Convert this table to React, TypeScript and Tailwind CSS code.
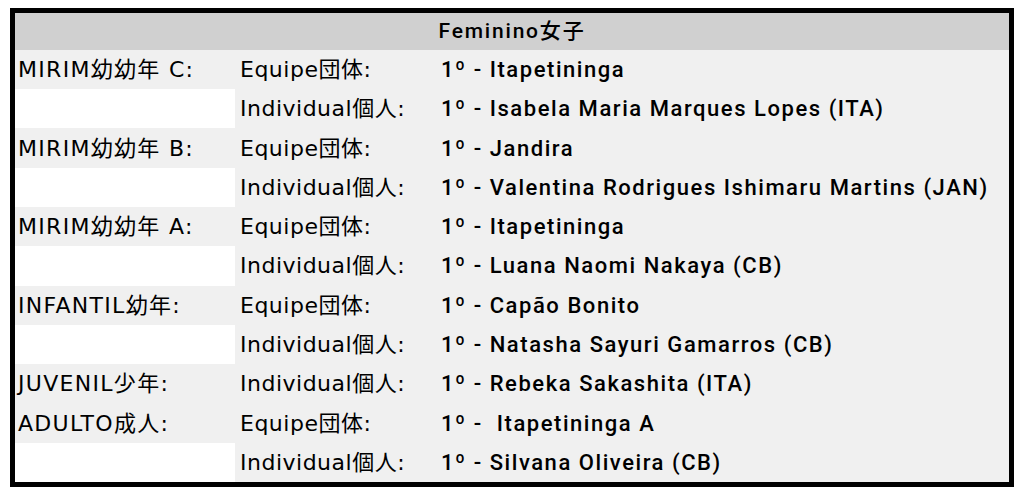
import React from "react";

const rows: [string, string, string][] = [
  ["MIRIM幼幼年 C:", "Equipe団体:", "1º - Itapetininga"],
  ["", "Individual個人:", "1º - Isabela Maria Marques Lopes (ITA)"],
  ["MIRIM幼幼年 B:", "Equipe団体:", "1º - Jandira"],
  ["", "Individual個人:", "1º - Valentina Rodrigues Ishimaru Martins (JAN)"],
  ["MIRIM幼幼年 A:", "Equipe団体:", "1º - Itapetininga"],
  ["", "Individual個人:", "1º - Luana Naomi Nakaya (CB)"],
  ["INFANTIL幼年:", "Equipe団体:", "1º - Capão Bonito"],
  ["", "Individual個人:", "1º - Natasha Sayuri Gamarros (CB)"],
  ["JUVENIL少年:", "Individual個人:", "1º - Rebeka Sakashita (ITA)"],
  ["ADULTO成人:", "Equipe団体:", "1º -  Itapetininga A"],
  ["", "Individual個人:", "1º - Silvana Oliveira (CB)"],
];

export default function App() {
  return (
    <div className="w-[1024px] h-[497px] bg-white pt-[8px] pl-[10px]">
      <div className="w-[1004px] h-[479px] border-[5px] border-black flex flex-col bg-[#f0f0f0]">
        <div className="h-[37px] bg-[#d0d0d0] flex items-center justify-center text-[21px] font-medium tracking-[1.8px] text-black whitespace-pre font-['Roboto','Noto_Sans_CJK_JP',sans-serif]">
          Feminino女子
        </div>
        {rows.map((r, i) => (
          <div key={i} className="h-[39.4px] flex items-center text-black">
            <div
              className={`w-[220px] h-full flex items-center pl-[3px] text-[22px] tracking-[1.3px] whitespace-pre font-['DejaVu_Sans','Noto_Sans_CJK_JP',sans-serif] ${
                r[0] === "" ? "bg-white" : ""
              }`}
            >
              {r[0]}
            </div>
            <div className="w-[206px] pl-[5px] text-[22px] tracking-[0.5px] whitespace-pre font-['DejaVu_Sans','Noto_Sans_CJK_JP',sans-serif]">
              {r[1]}
            </div>
            <div className="flex-1 text-[22px] font-medium tracking-[1.55px] whitespace-pre font-['Roboto','Noto_Sans_CJK_JP',sans-serif]">
              {r[2]}
            </div>
          </div>
        ))}
      </div>
    </div>
  );
}
